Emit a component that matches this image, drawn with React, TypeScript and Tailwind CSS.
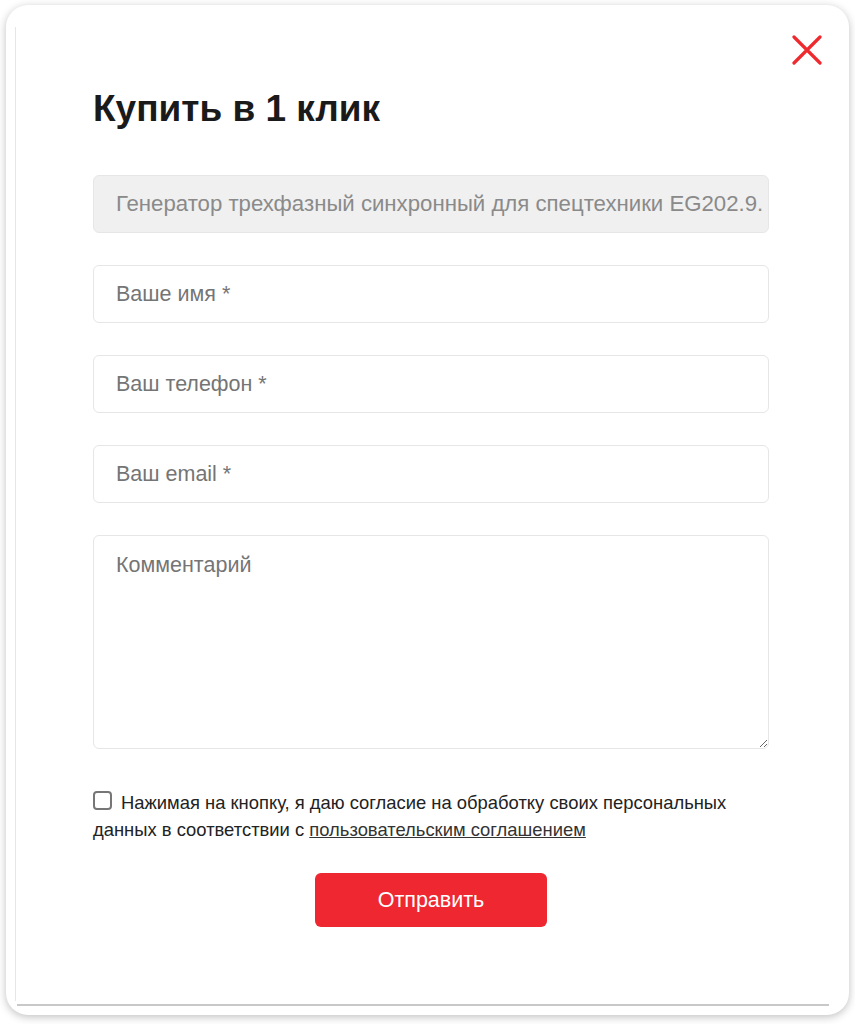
import React from "react";

const fields = ["Ваше имя *", "Ваш телефон *", "Ваш email *"];

const App = () => {
    return (
        <div className="w-[855px] h-[1024px] bg-white pt-[5px] px-[6px] font-['Liberation_Sans',Arial,sans-serif]">
            <div className="relative h-[1010px] rounded-[22px] bg-white shadow-[0_2px_8px_rgba(0,0,0,0.25)] overflow-hidden">
                {/* faint edge lines */}
                <div className="absolute left-[9px] top-[22px] bottom-[14px] w-px bg-[#e6e6e6]" />
                <div className="absolute left-[11px] right-[20px] bottom-[9px] h-[2px] bg-[#c8c8c8]" />

                <button className="absolute right-[27px] top-[30px] w-[30px] h-[30px]">
                    <svg viewBox="0 0 30 30" className="w-[30px] h-[30px]">
                        <path d="M2 2L28 28M28 2L2 28" stroke="#ee2a2f" strokeWidth="3.2" strokeLinecap="round" />
                    </svg>
                </button>

                <div className="pl-[87px] pr-[80px] pt-[79px]">
                    <h2 className="font-bold text-[37px] leading-[50px] text-[#1a1a1a]">Купить в 1 клик</h2>

                    <div className="mt-[41px] flex flex-col gap-[32px]">
                        <div className="h-[58px] rounded-[6px] border border-[#e6e6e6] bg-[#f0f0f0] pl-[22px] flex items-center text-[22.2px] text-[#8a8a8a] whitespace-nowrap">
                            Генератор трехфазный синхронный для спецтехники EG202.9.
                        </div>
                        {fields.map((f) => (
                            <input
                                key={f}
                                placeholder={f}
                                className="h-[58px] rounded-[6px] border border-[#e6e6e6] bg-white px-[22px] text-[21.5px] text-[#333] placeholder:text-[#757575] outline-none"
                            />
                        ))}
                        <textarea
                            placeholder="Комментарий"
                            className="h-[214px] rounded-[6px] border border-[#e6e6e6] bg-white px-[22px] pt-[15px] text-[21.5px] leading-[28px] text-[#333] placeholder:text-[#757575] outline-none resize-y"
                        />
                    </div>

                    <div className="mt-[40px] text-[18.4px] leading-[27px] text-[#222]">
                        <span className="inline-block align-[-1px] w-[19px] h-[19px] rounded-[4px] border-2 border-[#767676] mr-[9px]" />
                        Нажимая на кнопку, я даю согласие на обработку своих персональных данных в соответствии с{" "}
                        <a href="#" className="underline text-[#333]">пользовательским соглашением</a>
                    </div>

                    <div className="mt-[30px] flex justify-center">
                        <button className="w-[232px] h-[54px] rounded-[6px] bg-[#ee2730] text-white text-[21.5px]">Отправить</button>
                    </div>
                </div>
            </div>
        </div>
    );
};

export default App;
